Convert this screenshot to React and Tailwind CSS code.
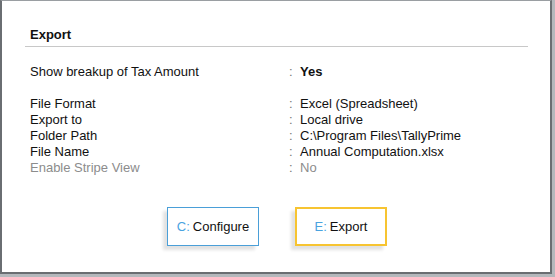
import React from 'react'

const rows = [
  { label: 'File Format', value: 'Excel (Spreadsheet)' },
  { label: 'Export to', value: 'Local drive' },
  { label: 'Folder Path', value: 'C:\\Program Files\\TallyPrime' },
  { label: 'File Name', value: 'Annual Computation.xlsx' },
  { label: 'Enable Stripe View', value: 'No', muted: true },
]

function Row({ label, value, muted, bold }) {
  return (
    <div className={`flex h-[16px] items-center ${muted ? 'text-[#8c8c8c]' : 'text-[#111]'}`}>
      <div className="w-[259px] shrink-0">{label}</div>
      <div className="w-[11px] shrink-0 text-[#777]">:</div>
      <div className={bold ? 'font-bold' : ''}>{value}</div>
    </div>
  )
}

export default function App() {
  return (
    <div
      className="w-[555px] h-[277px] bg-[#b4b8bc] text-[13px] leading-none"
      style={{ fontFamily: '"Liberation Sans", Arial, sans-serif' }}
    >
      <div className="w-[552px] h-[274px] bg-white border-t border-t-[#9a9ea2] border-l-2 border-r-2 border-b-2 border-[#6a6e72] flex flex-col">
        <div className="pl-[23px] pr-[22px]">
          <div className="mt-[27px] pl-[5px] pb-[5px] border-b border-[#c8c8c8] font-bold text-[#111]">
            Export
          </div>
        </div>

        <div className="pl-[28px] mt-[16px]">
          <Row label="Show breakup of Tax Amount" value="Yes" bold />
          <div className="h-[16px]" />
          {rows.map((r) => (
            <Row key={r.label} {...r} />
          ))}
        </div>

        <div className="flex pl-[165px] gap-[36px] mt-[32px]">
          <button className="w-[92px] h-[39px] border border-[#4a9fd8] bg-white flex items-center justify-center shadow-[-4px_4px_3px_#e2e2e2]">
            <span className="text-[#4aa3df]">C:</span>
            <span className="text-[#111] ml-[3px]">Configure</span>
          </button>
          <button className="w-[92px] h-[39px] border-2 border-[#f7c431] bg-white flex items-center justify-center shadow-[-4px_4px_3px_#e2e2e2]">
            <span className="text-[#4aa3df]">E:</span>
            <span className="text-[#111] ml-[3px]">Export</span>
          </button>
        </div>
      </div>
    </div>
  )
}
